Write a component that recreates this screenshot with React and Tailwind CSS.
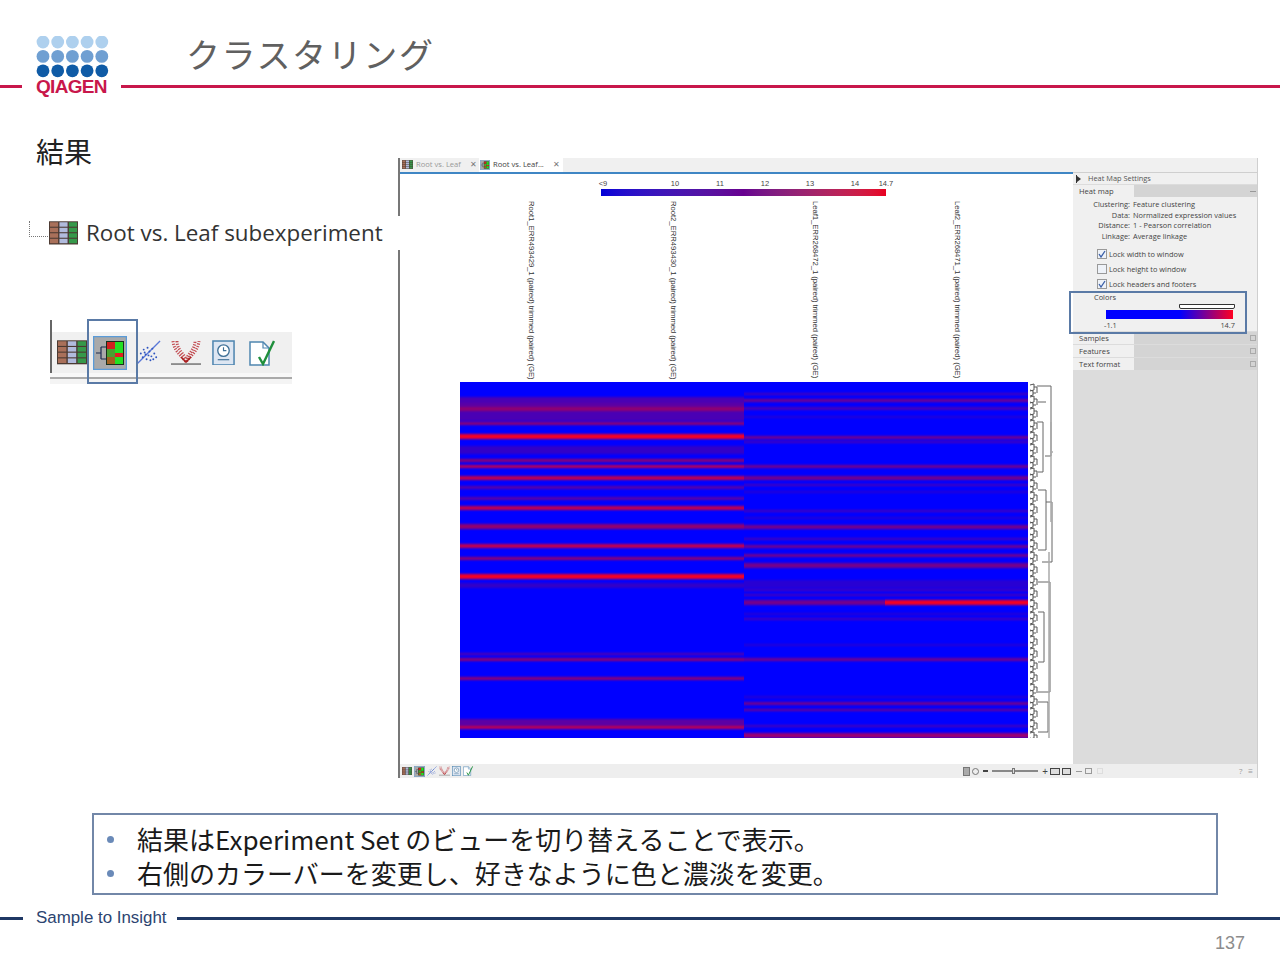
import React from "react";

const JP = "font-['Noto_Sans_CJK_JP','Noto_Sans',sans-serif]";
const UI = "font-['Open_Sans','Noto_Sans',sans-serif]";

const BLUE = "#0000ff";
const DIM = "#3200c8";
const PURPLE = "#5c00a4";
const MAGENTA = "#900070";
const CRIMSON = "#c00050";
const RED = "#f40024";

// heat map stripes: [y, height, colour], y is relative to the top of the map
const LEFT_STRIPES = [
  [15, 24, "#4a00b4"], [21, 4, PURPLE], [25, 4, MAGENTA], [40, 3, MAGENTA],
  [52, 5, RED], [64, 8, DIM], [77, 3, MAGENTA], [83, 3, CRIMSON], [94, 4, CRIMSON],
  [104, 3, PURPLE], [115, 3, PURPLE], [124, 4, CRIMSON], [142, 5, MAGENTA],
  [162, 4, CRIMSON], [175, 3, MAGENTA], [192, 5, RED], [201, 5, DIM],
  [271, 2, PURPLE], [276, 3, MAGENTA], [295, 3, MAGENTA], [337, 8, PURPLE],
  [344, 3, CRIMSON],
];
const RIGHT_STRIPES = [
  [11, 2, PURPLE], [17, 3, MAGENTA], [25, 3, PURPLE], [34, 2, DIM], [54, 3, MAGENTA],
  [59, 2, PURPLE], [83, 3, MAGENTA], [94, 4, MAGENTA], [102, 2, PURPLE], [109, 2, DIM],
  [128, 2, PURPLE], [135, 2, DIM], [143, 4, MAGENTA], [156, 2, PURPLE], [163, 3, MAGENTA],
  [172, 3, MAGENTA], [181, 5, MAGENTA], [198, 8, DIM], [207, 2, PURPLE], [212, 2, PURPLE],
  [218, 5, MAGENTA], [231, 2, DIM], [236, 2, PURPLE], [262, 2, DIM], [276, 3, MAGENTA],
  [314, 2, DIM], [320, 3, MAGENTA], [327, 2, MAGENTA], [343, 2, PURPLE], [351, 5, CRIMSON],
];

const SAMPLES = [
  "Root1_ERR493429_1 (paired) trimmed (paired) (GE)",
  "Root2_ERR493430_1 (paired) trimmed (paired) (GE)",
  "Leaf1_ERR268472_1 (paired) trimmed (paired) (GE)",
  "Leaf2_ERR268471_1 (paired) trimmed (paired) (GE)",
];

const SCALE = [
  ["<9", 2], ["10", 74], ["11", 119], ["12", 164], ["13", 209], ["14", 254], ["14.7", 285],
];

const HeatMap = () => (
  <svg width="568" height="356" className="block shrink-0">
    <defs>
      <filter id="soft" x="0" y="-5%" width="100%" height="110%" colorInterpolationFilters="sRGB">
        <feGaussianBlur stdDeviation="0 0.9" />
      </filter>
      <clipPath id="mapClip">
        <rect width="568" height="356" />
      </clipPath>
    </defs>
    <rect width="568" height="356" fill={BLUE} />
    <g clipPath="url(#mapClip)">
      <g filter="url(#soft)">
        {LEFT_STRIPES.map(([y, h, c], i) => (
          <rect key={i} x="0" y={y} width="284" height={h} fill={c} />
        ))}
        {RIGHT_STRIPES.map(([y, h, c], i) => (
          <rect key={i} x="284" y={y} width="284" height={h} fill={c} fillOpacity="0.8" />
        ))}
        <rect x="425" y="218" width="143" height="5" fill={RED} />
      </g>
    </g>
  </svg>
);

const Dendrogram = () => {
  const forks = [];
  for (let y = 3; y < 352; y += 12) {
    forks.push(
      <path
        key={y}
        d={`M2 ${y}l4 -1v6l-4 1M6 ${y + 2}h3M2 ${y + 5}l3 1v4l-3 1M5 ${y + 8}h3M9 ${y + 2}v6`}
        fill="none"
        stroke="#555"
        strokeWidth="1"
      />
    );
  }
  return (
    <svg width="30" height="356" className="block shrink-0">
      {forks}
      <path d="M9 4h14v70h-6M10 20h8M9 40h6v50h-5M10 108h8v60h-8M18 120h6v60h-10M10 200h12v110h-12M10 230h6v50h-6M10 320h10v30h-10" fill="none" stroke="#666" strokeWidth="1" />
      <path d="M23 40v100M24 70h1M21 170v200" fill="none" stroke="#aaa" strokeWidth="1.5" />
    </svg>
  );
};

const TableIcon = ({ size }) => (
  <svg width={size} height={size * 0.82} viewBox="0 0 30 24" className="block shrink-0">
    <rect width="30" height="24" fill="#4b3a32" />
    {[0, 1, 2].map((c) =>
      [0, 1, 2, 3].map((r) => (
        <rect
          key={`${c}-${r}`}
          x={1 + c * 9.8}
          y={1 + r * 5.7}
          width="8.4"
          height="4.6"
          fill={["#a9705a", "#b1bbdd", "#36994a"][c]}
        />
      ))
    )}
  </svg>
);

const ClusterIcon = ({ size }) => (
  <svg width={size} height={size} viewBox="0 0 34 34" className="block shrink-0">
    <rect x="0.5" y="0.5" width="33" height="33" fill="#a9a9a9" stroke="#5a9bd8" strokeWidth="1.5" />
    <path d="M3 17h5M8 11v12M8 11h5M8 23h5" fill="none" stroke="#1d2b4f" strokeWidth="1.2" />
    <rect x="13" y="5" width="18" height="24" fill="#17301c" />
    <rect x="14" y="6" width="8" height="7" fill="#d02020" />
    <rect x="22" y="6" width="8" height="7" fill="#22e022" />
    <rect x="14" y="13" width="8" height="8" fill="#4aa030" />
    <rect x="22" y="13" width="8" height="4" fill="#22e022" />
    <rect x="22" y="17" width="8" height="4" fill="#e02020" />
    <rect x="14" y="21" width="8" height="7" fill="#a06020" />
    <rect x="22" y="21" width="8" height="7" fill="#22e022" />
  </svg>
);

const ScatterIcon = ({ size }) => (
  <svg width={size} height={size} viewBox="0 0 26 26" className="block shrink-0">
    <path d="M1 25L25 1" stroke="#5a78d8" strokeWidth="1.4" />
    {[[5, 14], [8, 10], [10, 15], [12, 8], [14, 12], [16, 17], [17, 9], [11, 20], [15, 21], [19, 14], [21, 18], [7, 18], [13, 16], [18, 20], [9, 13]].map(([x, y]) => (
      <circle key={`${x}-${y}`} cx={x} cy={y} r="1" fill="#2f55c0" />
    ))}
  </svg>
);

const VolcanoIcon = ({ size }) => (
  <svg width={size} height={size * 0.87} viewBox="0 0 30 26" className="block shrink-0">
    <path d="M0 25h30" stroke="#555" strokeWidth="1.2" />
    <path d="M2 2C3 12 10 16 15 23C20 16 27 12 28 2M6 2C6 10 12 14 15 20C18 14 24 10 24 2" fill="none" stroke="#c24a50" strokeWidth="3" strokeDasharray="1.2 1.4" />
    <path d="M10 18L15 23L20 18" fill="none" stroke="#a82020" strokeWidth="1.6" />
  </svg>
);

const ReportIcon = ({ size }) => (
  <svg width={size} height={size * 1.13} viewBox="0 0 24 27" className="block shrink-0">
    <rect x="1" y="1" width="22" height="25" fill="#dde6f2" stroke="#4f86b0" strokeWidth="1.6" />
    <circle cx="12" cy="11" r="6" fill="#fff" stroke="#3d6f96" strokeWidth="1.4" />
    <path d="M12 7.5V11h3" fill="none" stroke="#3d6f96" strokeWidth="1.2" />
    <path d="M6 20.5h12" stroke="#3d6f96" strokeWidth="1.2" />
  </svg>
);

const CheckIcon = ({ size }) => (
  <svg width={size} height={size} viewBox="0 0 26 26" className="block shrink-0">
    <path d="M1 2h13l6 6v17H1z" fill="#fff" stroke="#4f86b0" strokeWidth="1.5" />
    <path d="M14 2v6h6" fill="none" stroke="#4f86b0" strokeWidth="1.2" />
    <path d="M10 17l4 7L25 1" fill="none" stroke="#1f8f3c" strokeWidth="2.4" />
  </svg>
);

const Logo = () => (
  <div className="flex flex-col items-start w-[72px]">
    <svg width="74" height="42" className="block shrink-0">
      {["#aed0ee", "#6f9fd2", "#0f5ba6"].map((fill, r) =>
        [0, 1, 2, 3, 4].map((c) => (
          <circle key={`${r}-${c}`} cx={7 + c * 14.7} cy={6 + r * 14.4} r="6.4" fill={fill} />
        ))
      )}
    </svg>
    <span className="font-['Liberation_Sans',sans-serif] font-bold text-[19px] leading-[18px] tracking-[-0.7px] text-[#c8174b] whitespace-nowrap">
      QIAGEN
    </span>
  </div>
);

const Check = ({ on }) => (
  <span className="w-[10px] h-[10px] border border-[#999] bg-[#eef2f8] flex items-center justify-center shrink-0">
    {on && (
      <svg width="8" height="8" viewBox="0 0 8 8" className="block">
        <path d="M1 4l2 3 4-6" fill="none" stroke="#3a5fa8" strokeWidth="1.3" />
      </svg>
    )}
  </span>
);

const PanelTab = ({ label, collapsed }) => (
  <div className="flex h-[12px] mt-px">
    <div className="w-[61px] bg-[#f0f0f0] pl-[6px] text-[7.6px] leading-[12px] text-[#444]">{label}</div>
    <div className="flex-1 bg-[#d4d4d4] flex items-center justify-end pr-[2px]">
      {collapsed ? (
        <span className="w-[6px] h-[6px] border border-[#aaa]" />
      ) : (
        <span className="w-[6px] h-px bg-[#999]" />
      )}
    </div>
  </div>
);

const SettingsPanel = () => (
  <div className={`w-[185px] shrink-0 flex flex-col bg-[#dcdcdc] border-t border-[#cfcfcf] ${UI}`}>
    <div className="h-[11px] bg-[#f0f0f0] flex items-center gap-[3px] pl-[3px] text-[7.4px] text-[#555]">
      <span className="w-px h-[8px] bg-[#333]" />
      <span className="w-0 h-0 border-y-[3px] border-y-transparent border-l-[4px] border-l-[#333] -ml-[3px]" />
      <span className="ml-[4px]">Heat Map Settings</span>
    </div>
    <PanelTab label="Heat map" />
    <div className="h-[134px] bg-[#f0f0f0] text-[7.4px] leading-[10.5px] text-[#444] pt-[2px]">
      <div className="grid grid-cols-[54px_1fr] gap-x-[2px] pl-[4px] whitespace-nowrap">
        <span className="text-right pr-px">Clustering:</span><span>Feature clustering</span>
        <span className="text-right pr-px">Data:</span><span>Normalized expression values</span>
        <span className="text-right pr-px">Distance:</span><span>1 - Pearson correlation</span>
        <span className="text-right pr-px">Linkage:</span><span>Average linkage</span>
      </div>
      <div className="flex flex-col gap-[4.5px] pl-[24px] mt-[8px]">
        <div className="flex items-center gap-[2px]"><Check on />Lock width to window</div>
        <div className="flex items-center gap-[2px]"><Check />Lock height to window</div>
        <div className="flex items-center gap-[2px]"><Check on />Lock headers and footers</div>
      </div>
      <div className="pl-[21px] mt-[2px]">Colors</div>
      <div className="w-[127px] ml-[33px] mt-[2px]">
        <div className="h-[5px] w-[56px] ml-[73px] bg-white border border-[#333] rounded-b-[2px]" />
        <div className="h-[9px] mt-px bg-[linear-gradient(to_right,#0000ff_58%,#ff0020_100%)]" />
        <div className="flex justify-between -mx-[2px] mt-px">
          <span>-1.1</span><span>14.7</span>
        </div>
      </div>
    </div>
    <PanelTab label="Samples" collapsed />
    <PanelTab label="Features" collapsed />
    <PanelTab label="Text format" collapsed />
    <div className="flex-1" />
    <div className="h-[14px] bg-[#eeeeee] flex items-center gap-[3px] pl-[3px] pr-[5px] text-[8px] text-[#999]">
      <span className="w-[6px] h-px bg-[#999]" />
      <span className="w-[7px] h-[6px] border border-[#999]" />
      <span className="w-[6px] h-[6px] border border-[#ddd] ml-[2px]" />
      <span className="ml-auto">?</span>
      <span className="ml-[3px]">≡</span>
    </div>
  </div>
);

const Window = () => (
  <div className="relative w-[860px] h-[620px] shrink-0 flex flex-col border-l-2 border-[#777] bg-white">
    {/* tabs */}
    <div className={`h-[14px] shrink-0 bg-[#f0f0f0] flex items-center text-[7.6px] whitespace-nowrap ${UI}`}>
      <span className="flex items-center gap-[3px] pl-[2px] w-[79px] text-[#999]">
        <TableIcon size={11} />Root vs. Leaf<span className="ml-[6px] text-[#777]">✕</span>
      </span>
      <span className="flex items-center gap-[3px] pl-px h-full bg-white w-[84px] text-[#444]">
        <ClusterIcon size={10} />Root vs. Leaf...<span className="ml-[6px] text-[#777]">✕</span>
      </span>
    </div>
    <div className="flex-1 flex min-h-0">
      <div className="flex-1 flex flex-col border-t-2 border-[#3f86c4] min-w-0">
        {/* colour scale */}
        <div className="relative ml-[201px] w-[285px] h-[17px] mt-[5px] shrink-0 text-[7.5px] leading-[10px] text-[#444] font-['Liberation_Sans',sans-serif]">
          {SCALE.map(([label, x]) => (
            <span key={label} className="absolute top-0 -translate-x-1/2" style={{ left: x }}>{label}</span>
          ))}
          <div className="absolute left-0 right-0 bottom-0 h-[7px] bg-linear-to-r from-[#0000d8] via-[#680090] to-[#e80020]" />
        </div>
        {/* sample labels */}
        <div className="flex h-[181px] mt-[5px] shrink-0">
          {SAMPLES.map((s, i) => (
            <div key={s} className={`w-[142px] shrink-0 ${i === 0 ? "ml-[127px]" : ""}`}>
              <span className="[writing-mode:vertical-rl] text-[7.8px] leading-[9px] tracking-[-0.1px] whitespace-nowrap text-[#333] font-['Liberation_Sans',sans-serif]">
                {s}
              </span>
            </div>
          ))}
        </div>
        <div className="flex ml-[60px]">
          <HeatMap />
          <Dendrogram />
        </div>
        <div className="flex-1" />
        {/* status bar */}
        <div className="h-[14px] shrink-0 bg-[#eeeeee] flex items-center pl-[2px] gap-[2px]">
          <TableIcon size={10} />
          <ClusterIcon size={11} />
          <ScatterIcon size={10} />
          <VolcanoIcon size={11} />
          <ReportIcon size={9} />
          <CheckIcon size={10} />
          <div className="ml-auto flex items-center gap-[2px] pr-[2px] text-[#444]">
            <span className="w-[7px] h-[9px] bg-[#aaa] border border-[#777]" />
            <span className="w-[7px] h-[7px] rounded-full border border-[#777]" />
            <span className="w-[5px] h-[1.5px] bg-[#444] ml-[2px]" />
            <span className="relative w-[46px] h-[2px] bg-[#888] mx-[2px]">
              <span className="absolute left-[20px] -top-[2px] w-[3px] h-[6px] bg-[#ddd] border border-[#777]" />
            </span>
            <span className="text-[10px] leading-none">+</span>
            <span className="w-[10px] h-[7px] border border-[#444] bg-[#ddd]" />
            <span className="w-[9px] h-[7px] border border-[#444] bg-[#ddd]" />
          </div>
        </div>
      </div>
      <SettingsPanel />
    </div>
    {/* highlight over the Colors control */}
    <div className="absolute left-[669px] top-[133px] w-[178px] h-[43px] border-2 border-[#5a7aa6] pointer-events-none" />
    <div className="absolute right-0 top-0 bottom-0 w-px bg-[#cfcfcf]" />
  </div>
);

const Toolbar = () => (
  <div className="relative ml-[14px] mt-[70px] w-[242px] h-[64px] flex flex-col">
    <div className="h-[12px]" />
    <div className="h-[41px] bg-[#f0f0f0] flex items-center pl-[7px]">
      <TableIcon size={30} />
      <div className="ml-[6px]"><ClusterIcon size={34} /></div>
      <div className="ml-[9px]"><ScatterIcon size={25} /></div>
      <div className="ml-[10px]"><VolcanoIcon size={30} /></div>
      <div className="ml-[11px]"><ReportIcon size={23} /></div>
      <div className="ml-[14px]"><CheckIcon size={26} /></div>
    </div>
    <div className="h-[11px] bg-[linear-gradient(to_bottom,#f8f8f8_0,#f8f8f8_4px,#aaa_4px,#aaa_6px,#f4f4f4_6px,#f4f4f4_100%)]" />
    <div className="absolute left-0 top-0 w-[2px] h-[53px] bg-[#666]" />
    <div className="absolute left-[37px] -top-px w-[51px] h-[65px] border-2 border-[#5a7aa6]" />
  </div>
);

const LeftColumn = () => (
  <div className="w-[398px] shrink-0 flex flex-col">
    <div className={`pl-[36px] h-[32px] mt-[-23px] text-[28px] leading-[32px] text-[#222] ${JP}`}>結果</div>
    <div className="relative z-10 mt-[49px] w-[400px] h-[34px] bg-white flex items-center pl-[29px]">
      <span className="w-[19px] h-[16px] -mt-[9px] border-l border-b border-dotted border-[#777] shrink-0" />
      <span className="ml-px"><TableIcon size={29} /></span>
      <span className={`ml-[8px] text-[22.4px] leading-[30px] text-[#333] whitespace-nowrap ${UI}`}>
        Root vs. Leaf subexperiment
      </span>
    </div>
    <div className="ml-[36px]"><Toolbar /></div>
  </div>
);

const Bullet = () => (
  <span className="w-[31px] shrink-0 pl-px">
    <span className="block w-[7px] h-[7px] rounded-full bg-[#6a8ab8]" />
  </span>
);

const App = () => (
  <div className="w-[1280px] h-[960px] bg-white flex flex-col overflow-hidden">
    {/* header */}
    <header className="flex items-start h-[136px] shrink-0">
      <div className="w-[22px] h-[3px] mt-[85px] bg-[#c8174b] shrink-0" />
      <div className="w-[99px] pl-[14px] pt-[36px] shrink-0"><Logo /></div>
      <div className="flex-1 flex flex-col">
        <h1 className={`pl-[65px] h-[85px] pt-[30px] text-[34px] leading-[48px] tracking-[1.6px] font-normal text-[#606060] ${JP}`}>
          クラスタリング
        </h1>
        <div className="h-[3px] bg-[#c8174b]" />
      </div>
    </header>

    <main className="flex h-[620px] shrink-0 mt-[22px]">
      <LeftColumn />
      <Window />
    </main>

    {/* callout */}
    <div className={`ml-[92px] mt-[35px] w-[1126px] h-[82px] shrink-0 border-2 border-[#7287a8] flex flex-col justify-center pt-[4px] pl-[12px] text-[26px] leading-[34px] text-[#1a1a1a] ${JP}`}>
      <div className="flex items-center whitespace-nowrap">
        <Bullet />
        結果はExperiment Set のビューを切り替えることで表示。
      </div>
      <div className="flex items-center whitespace-nowrap">
        <Bullet />
        右側のカラーバーを変更し、好きなように色と濃淡を変更。
      </div>
    </div>

    {/* footer */}
    <footer className="flex items-center h-[22px] mt-[12px] shrink-0 font-['Liberation_Sans',sans-serif]">
      <div className="w-[23px] h-[3px] bg-[#1f3864]" />
      <span className="ml-[13px] text-[16.9px] text-[#2c4470] whitespace-nowrap">Sample to Insight</span>
      <div className="flex-1 h-[3px] ml-[10px] bg-[#1f3864]" />
    </footer>
    <div className="pr-[35px] pt-[2px] text-right text-[18px] leading-[24px] text-[#8c8c8c] font-['Liberation_Sans',sans-serif]">
      137
    </div>
  </div>
);

export default App;
